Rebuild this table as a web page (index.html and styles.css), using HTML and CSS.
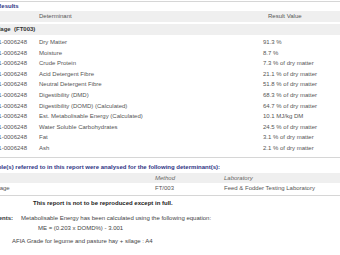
FILE: index.html
```html
<!DOCTYPE html>
<html>
<head>
<meta charset="utf-8">
<link rel="stylesheet" href="styles.css">
</head>
<body>
<div class="report">
  <div class="title results-title">Results</div>
  <div class="grid-row head-row">
    <div class="c-code"></div>
    <div class="c-det">Determinant</div>
    <div class="c-res head-res">Result Value</div>
  </div>
  <div class="group-row">Silage&nbsp;&nbsp;(FT003)</div>
  <div class="rows">
    <div class="grid-row data-row"><div class="c-code">21-0006248</div><div class="c-det">Dry Matter</div><div class="c-res">91.3 %</div></div>
    <div class="grid-row data-row"><div class="c-code">21-0006248</div><div class="c-det">Moisture</div><div class="c-res">8.7 %</div></div>
    <div class="grid-row data-row"><div class="c-code">21-0006248</div><div class="c-det">Crude Protein</div><div class="c-res">7.3 % of dry matter</div></div>
    <div class="grid-row data-row"><div class="c-code">21-0006248</div><div class="c-det">Acid Detergent Fibre</div><div class="c-res">21.1 % of dry matter</div></div>
    <div class="grid-row data-row"><div class="c-code">21-0006248</div><div class="c-det">Neutral Detergent Fibre</div><div class="c-res">51.8 % of dry matter</div></div>
    <div class="grid-row data-row"><div class="c-code">21-0006248</div><div class="c-det">Digestibility (DMD)</div><div class="c-res">68.3 % of dry matter</div></div>
    <div class="grid-row data-row"><div class="c-code">21-0006248</div><div class="c-det">Digestibility (DOMD) (Calculated)</div><div class="c-res">64.7 % of dry matter</div></div>
    <div class="grid-row data-row"><div class="c-code">21-0006248</div><div class="c-det">Est. Metabolisable Energy (Calculated)</div><div class="c-res">10.1 MJ/kg DM</div></div>
    <div class="grid-row data-row"><div class="c-code">21-0006248</div><div class="c-det">Water Soluble Carbohydrates</div><div class="c-res">24.5 % of dry matter</div></div>
    <div class="grid-row data-row"><div class="c-code">21-0006248</div><div class="c-det">Fat</div><div class="c-res">3.1 % of dry matter</div></div>
    <div class="grid-row data-row"><div class="c-code">21-0006248</div><div class="c-det">Ash</div><div class="c-res">2.1 % of dry matter</div></div>
  </div>

  <div class="title method-title">Sample(s) referred to in this report were analysed for the following determinant(s):</div>
  <div class="m-row m-head">
    <div class="m-sample"></div>
    <div class="m-method">Method</div>
    <div class="m-lab">Laboratory</div>
  </div>
  <div class="m-row m-data">
    <div class="m-sample">Silage</div>
    <div class="m-method">FT/003</div>
    <div class="m-lab">Feed &amp; Fodder Testing Laboratory</div>
  </div>

  <div class="notice">This report is not to be reproduced except in full.</div>

  <div class="comments">
    <div class="c-label">Comments:</div>
    <div class="c-body">
      <div>Metabolisable Energy has been calculated using the following equation:</div>
      <div class="formula">ME = (0.203 x DOMD%) - 3.001</div>
    </div>
  </div>
  <div class="grade">AFIA Grade for legume and pasture hay + silage : A4</div>
</div>
</body>
</html>
```
FILE: styles.css
```css
html, body {
  margin: 0;
  padding: 0;
  overflow: hidden;
  background: #ffffff;
}

body {
  font-family: "Liberation Sans", Arial, sans-serif;
  font-size: 6px;
  color: #555555;
}

.report {
  margin-left: -20px;
  margin-top: 1px;
  border-top: 1px solid #d6d6d6;
}

.title {
  font-weight: bold;
  color: #2f3585;
  line-height: 8px;
  white-space: nowrap;
}

.results-title {
  padding-left: 17px;
  margin-bottom: 1px;
}

.grid-row {
  display: grid;
  grid-template-columns: 59px 224px 1fr;
  white-space: nowrap;
}

.head-row {
  background: #efefef;
  height: 11px;
  line-height: 11px;
  color: #555555;
}

.head-res {
  padding-left: 5px;
}

.c-code {
  padding-left: 15px;
}

.c-det {
  padding-left: 0;
}

.group-row {
  margin-top: 2px;
  background: #efefef;
  height: 11px;
  line-height: 11px;
  font-weight: bold;
  color: #333333;
  padding-left: 13px;
}

.rows {
  padding-top: 2px;
  padding-bottom: 3px;
  border-bottom: 1px solid #d6d6d6;
}

.data-row {
  height: 10.6px;
  line-height: 10.6px;
}

.method-title {
  margin-top: 5.5px;
  padding-left: 5px;
}

.m-row {
  display: grid;
  grid-template-columns: 175px 69px 1fr;
  white-space: nowrap;
}

.m-head {
  margin-top: 2px;
  background: #efefef;
  height: 10px;
  line-height: 10px;
  font-style: italic;
  color: #666666;
}

.m-data {
  height: 10px;
  line-height: 10px;
  padding-bottom: 2px;
  border-bottom: 1px solid #d6d6d6;
}

.m-sample {
  padding-left: 13px;
}

.notice {
  margin-top: 3px;
  line-height: 8px;
  font-weight: bold;
  color: #222222;
  padding-left: 53px;
  white-space: nowrap;
}

.comments {
  margin-top: 6px;
  display: grid;
  grid-template-columns: 41px 1fr;
  line-height: 10px;
  color: #444444;
  white-space: nowrap;
}

.c-label {
  font-weight: bold;
  color: #333333;
}

.formula {
  padding-left: 17px;
}

.grade {
  margin-top: 3px;
  line-height: 10px;
  padding-left: 32px;
  color: #444444;
  white-space: nowrap;
}
```
